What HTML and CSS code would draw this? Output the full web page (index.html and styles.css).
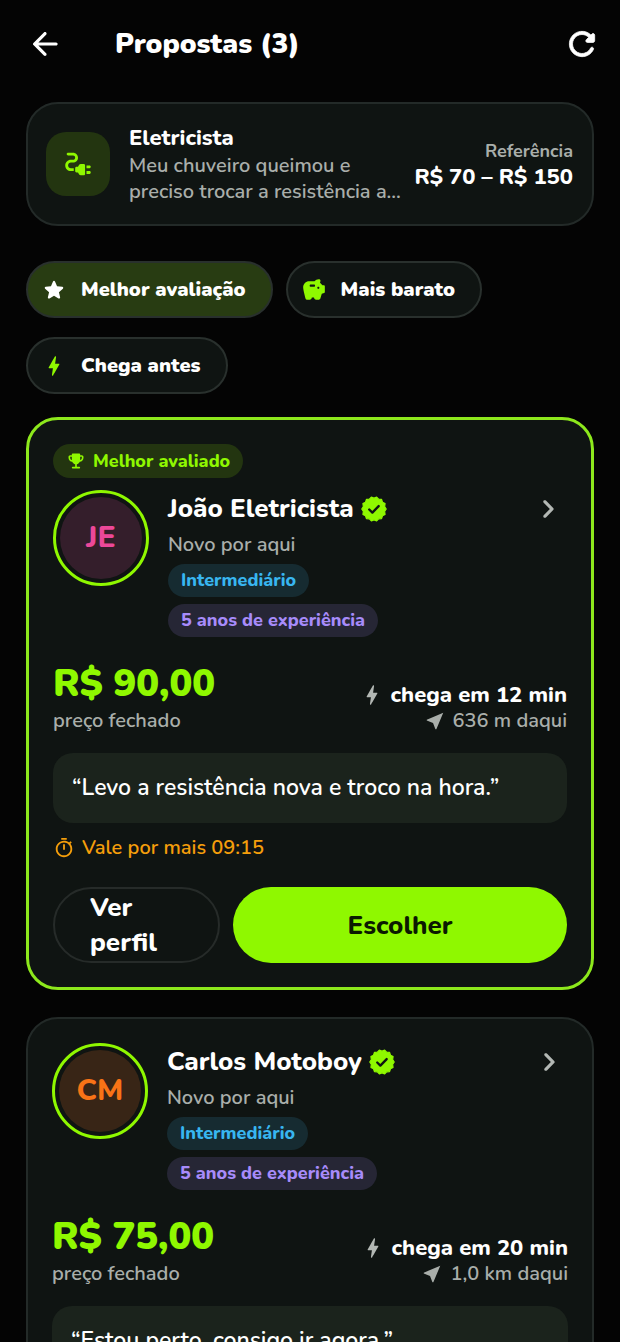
FILE: index.html
```html
<!DOCTYPE html>
<html lang="pt-BR">
<head>
  <meta charset="UTF-8">
  <meta name="viewport" content="width=device-width, initial-scale=1.0">
  <title>Propostas</title>
  <link rel="stylesheet" href="styles.css">
</head>
<body>
  <!-- shared icons -->
  <svg class="sprite" aria-hidden="true">
    <symbol id="bolt" viewBox="0 0 24 24"><path d="M10.67 21c-.35 0-.62-.31-.57-.66L11 14H7.5c-.88 0-.33-.75-.31-.78 1.26-2.23 3.15-5.53 5.65-9.93.1-.18.3-.29.5-.29.35 0 .62.31.57.66l-.9 6.34h3.51c.4 0 .62.19.4.66-3.29 5.74-5.2 9.09-5.75 10.05-.1.18-.29.29-.5.29z"/></symbol>
    <symbol id="verified" viewBox="0 0 24 24">
      <path stroke="currentColor" stroke-width="1" stroke-linejoin="round" d="M22.5 12 21.1 14.1 21.5 16.6 19.3 17.8 18.5 20.2 16 20.4 14.3 22.2 12 21.3 9.7 22.2 8 20.4 5.5 20.2 4.7 17.8 2.5 16.6 2.9 14.1 1.5 12 2.9 9.9 2.5 7.4 4.7 6.2 5.5 3.8 8 3.6 9.7 1.8 12 2.7 14.3 1.8 16 3.6 18.5 3.8 19.3 6.2 21.5 7.4 21.1 9.9z"/>
      <path fill="none" stroke="#0f1412" stroke-width="2" stroke-linecap="round" stroke-linejoin="round" d="M7.9 12.4l2.7 2.7 5.4-5.6"/>
    </symbol>
    <symbol id="chevron" viewBox="0 0 24 24"><path d="M9.29 15.88 13.17 12 9.29 8.12c-.39-.39-.39-1.02 0-1.41.39-.39 1.02-.39 1.41 0l4.59 4.59c.39.39.39 1.02 0 1.41L10.7 17.3c-.39.39-1.02.39-1.41 0-.38-.39-.39-1.03 0-1.42z"/></symbol>
    <symbol id="near" viewBox="0 0 24 24"><path d="M21 3 3 10.53v.98l6.84 2.65L12.48 21h.98L21 3z"/></symbol>
  </svg>

  <div class="screen">
    <header class="topbar">
      <button class="icon-btn" type="button" aria-label="Voltar">
        <svg class="icon icon-xl" viewBox="0 0 24 24"><path d="M19 11H7.83l4.88-4.88c.39-.39.39-1.03 0-1.42-.39-.39-1.02-.39-1.41 0l-6.59 6.59c-.39.39-.39 1.02 0 1.41l6.59 6.59c.39.39 1.02.39 1.41 0 .39-.39.39-1.02 0-1.41L7.83 13H19c.55 0 1-.45 1-1s-.45-1-1-1z"/></svg>
      </button>
      <h1 class="title">Propostas (3)</h1>
      <button class="icon-btn" type="button" aria-label="Atualizar">
        <svg class="icon icon-xl icon-heavy" viewBox="0 0 24 24"><path d="M17.65 6.35c-1.63-1.63-3.94-2.57-6.48-2.31-3.67.37-6.69 3.35-7.1 7.02C3.52 15.91 7.27 20 12 20c3.19 0 5.93-1.87 7.21-4.56.32-.67-.16-1.44-.9-1.44-.37 0-.72.2-.88.53-1.13 2.43-3.84 3.97-6.8 3.31-2.22-.49-4.01-2.3-4.48-4.52C5.31 9.44 8.26 6 12 6c1.66 0 3.14.69 4.22 1.78l-1.51 1.51c-.63.63-.19 1.71.7 1.71H19c.55 0 1-.45 1-1V6.41c0-.89-1.08-1.34-1.71-.71l-.64.65z"/></svg>
      </button>
    </header>

    <main class="content">
      <section class="request">
        <div class="request-icon">
          <svg class="icon icon-lg" viewBox="0 0 24 24"><path d="M20.2 13H18v2h2.2c.4 0 .8-.4.8-1s-.4-1-.8-1zM20.2 17H18v2h2.2c.4 0 .8-.4.8-1s-.4-1-.8-1zM16 12h-2c-.6 0-1 .3-1.3.7L12 14h-1c-.6 0-1 .4-1 1v2c0 .6.4 1 1 1h1l.7 1.3c.3.4.7.7 1.3.7h2c.6 0 1-.4 1-1v-6c0-.6-.4-1-1-1z"/><path d="M5 13c0-1.1.9-2 2-2h1.5c1.93 0 3.5-1.57 3.5-3.5S10.43 4 8.5 4H5c-.55 0-1 .45-1 1s.45 1 1 1h3.5c.83 0 1.5.67 1.5 1.5S9.33 9 8.5 9H7c-2.21 0-4 1.79-4 4s1.79 4 4 4h2v-2H7c-1.1 0-2-.9-2-2z"/></svg>
        </div>
        <div class="request-text">
          <h2 class="request-title">Eletricista</h2>
          <p class="request-desc">Meu chuveiro queimou e<br>preciso trocar a resistência a…</p>
        </div>
        <div class="request-ref">
          <span class="ref-label">Referência</span>
          <strong class="ref-value">R$ 70 – R$ 150</strong>
        </div>
      </section>

      <div class="chips">
        <button class="chip chip-active" type="button">
          <svg class="icon icon-md" viewBox="0 0 24 24"><path d="M12 17.27l4.15 2.51c.76.46 1.69-.22 1.49-1.08l-1.1-4.72 3.67-3.18c.67-.58.31-1.68-.57-1.75l-4.83-.41-1.89-4.46c-.34-.81-1.5-.81-1.84 0L9.19 8.63l-4.83.41c-.88.07-1.24 1.17-.57 1.75l3.67 3.18-1.1 4.72c-.2.86.73 1.54 1.49 1.08l4.15-2.5z"/></svg>
          Melhor avaliação
        </button>
        <button class="chip" type="button">
          <svg class="icon icon-md" viewBox="0 0 24 24"><path d="M19.83 7.5l-2.27-2.27c.07-.42.18-.81.32-1.15.11-.26.15-.56.09-.87C17.84 2.49 17.14 1.99 16.4 2c-1.59.03-3 .81-3.9 2h-5C4.46 4 2 6.46 2 9.5c0 2.25 1.37 7.48 2.08 10.04.24.86 1.03 1.46 1.93 1.46H8c1.1 0 2-.9 2-2h2c0 1.1.9 2 2 2h2.01c.88 0 1.66-.58 1.92-1.43l1.25-4.16 2.14-.72c.41-.14.68-.52.68-.95V8.5c0-.55-.45-1-1-1h-1.17zM12 9H9c-.55 0-1-.45-1-1s.45-1 1-1h3c.55 0 1 .45 1 1s-.45 1-1 1zm4 2c-.55 0-1-.45-1-1s.45-1 1-1 1 .45 1 1-.45 1-1 1z"/></svg>
          Mais barato
        </button>
        <button class="chip" type="button">
          <svg class="icon icon-md"><use href="#bolt"/></svg>
          Chega antes
        </button>
      </div>

      <article class="card card-best">
        <div class="badge">
          <svg class="icon icon-xs" viewBox="0 0 24 24"><path d="M19 5h-2V4c0-.55-.45-1-1-1H8c-.55 0-1 .45-1 1v1H5c-1.1 0-2 .9-2 2v1c0 2.55 1.92 4.63 4.39 4.94.63 1.5 1.98 2.63 3.61 2.96V19H8c-.55 0-1 .45-1 1s.45 1 1 1h8c.55 0 1-.45 1-1s-.45-1-1-1h-3v-3.1c1.63-.33 2.98-1.46 3.61-2.96C19.08 12.63 21 10.55 21 8V7c0-1.1-.9-2-2-2zM5 8V7h2v3.82C5.84 10.4 5 9.3 5 8zm14 0c0 1.3-.84 2.4-2 2.82V7h2v1z"/></svg>
          Melhor avaliado
        </div>
        <div class="worker">
          <div class="avatar"><span class="initials initials-pink">JE</span></div>
          <div class="worker-info">
            <h2 class="name">João Eletricista <svg class="icon badge-check"><use href="#verified"/></svg></h2>
            <p class="rating">Novo por aqui</p>
            <div class="tags">
              <span class="tag tag-blue">Intermediário</span>
              <span class="tag tag-purple">5 anos de experiência</span>
            </div>
          </div>
          <a class="more" href="#" aria-label="Ver João Eletricista"><svg class="icon icon-xl"><use href="#chevron"/></svg></a>
        </div>
        <div class="offer">
          <div>
            <p class="price">R$ 90,00</p>
            <p class="muted">preço fechado</p>
          </div>
          <div class="arrival">
            <p class="eta"><svg class="icon icon-md"><use href="#bolt"/></svg>chega em 12 min</p>
            <p class="distance"><svg class="icon icon-sm"><use href="#near"/></svg>636 m daqui</p>
          </div>
        </div>
        <p class="quote">“Levo a resistência nova e troco na hora.”</p>
        <p class="timer">
          <svg class="icon icon-sm" viewBox="0 0 24 24"><path d="M15 1H9v2h6V1zm-4 13h2V8h-2v6zm8.03-6.61 1.42-1.42c-.43-.51-.9-.99-1.41-1.41l-1.42 1.42C16.07 4.74 14.12 4 12 4c-4.97 0-9 4.03-9 9s4.02 9 9 9 9-4.03 9-9c0-2.12-.74-4.07-1.97-5.61zM12 20c-3.87 0-7-3.13-7-7s3.13-7 7-7 7 3.13 7 7-3.13 7-7 7z"/></svg>
          Vale por mais 09:15
        </p>
        <div class="actions">
          <button class="btn btn-outline" type="button">Ver perfil</button>
          <button class="btn btn-primary" type="button">Escolher</button>
        </div>
      </article>

      <article class="card">
        <div class="worker">
          <div class="avatar"><span class="initials initials-orange">CM</span></div>
          <div class="worker-info">
            <h2 class="name">Carlos Motoboy <svg class="icon badge-check"><use href="#verified"/></svg></h2>
            <p class="rating">Novo por aqui</p>
            <div class="tags">
              <span class="tag tag-blue">Intermediário</span>
              <span class="tag tag-purple">5 anos de experiência</span>
            </div>
          </div>
          <a class="more" href="#" aria-label="Ver Carlos Motoboy"><svg class="icon icon-xl"><use href="#chevron"/></svg></a>
        </div>
        <div class="offer">
          <div>
            <p class="price">R$ 75,00</p>
            <p class="muted">preço fechado</p>
          </div>
          <div class="arrival">
            <p class="eta"><svg class="icon icon-md"><use href="#bolt"/></svg>chega em 20 min</p>
            <p class="distance"><svg class="icon icon-sm"><use href="#near"/></svg>1,0 km daqui</p>
          </div>
        </div>
        <p class="quote">“Estou perto, consigo ir agora.”</p>
      </article>
    </main>
  </div>
</body>
</html>
```
FILE: styles.css
```css
*{margin: 0; padding: 0; box-sizing: border-box;}
body{background: #040404; color: #fff; font-family: Nunito, "Noto Sans", sans-serif; font-size: 20px; line-height: 26px; font-weight: 600;}
button{font-family: inherit; color: inherit; background: none; border: none; cursor: pointer;}
.sprite{display: none;}
.screen{height: 100vh; overflow-y: auto; scrollbar-width: none;}

.icon{width: 24px; height: 24px; fill: currentColor; flex: none; display: block;}
.icon-xs{width: 20px; height: 20px;}
.icon-sm{width: 22px; height: 22px;}
.icon-md{width: 26px; height: 26px;}
.icon-lg{width: 34px; height: 34px;}
.icon-xl{width: 38px; height: 38px;}
.icon-heavy{stroke: currentColor; stroke-width: .5;}

.topbar{display: flex; align-items: center; height: 88px; padding: 0 19px 0 26px;}
.icon-btn{display: flex;}
.title{flex: 1; margin-left: 51px; font-size: 28px; line-height: 38px; font-weight: 900;}

.content{padding: 14px 26px 26px;}

.request{display: flex; align-items: center; height: 124px; padding: 0 19px 0 18px; border: 2px solid #232a28; border-radius: 32px; background: #0f1412;}
.request-icon{display: flex; align-items: center; justify-content: center; flex: none; width: 64px; height: 64px; border-radius: 20px; background: #233510; color: #8ff800;}
.request-text{flex: 1; min-width: 0; margin-left: 19px;}
.request-title{font-size: 22px; line-height: 30px; font-weight: 800;}
.request-desc{color: #a9aeaa; white-space: nowrap;}
.request-ref{display: flex; flex-direction: column; align-items: flex-end; white-space: nowrap;}
.ref-label{font-size: 18px; font-weight: 700; color: #a9aeaa;}
.ref-value{font-size: 22px; font-weight: 800;}

.chips{display: flex; flex-wrap: wrap; gap: 19px 13px; margin-top: 35px;}
.chip{display: flex; align-items: center; gap: 14px; height: 57px; padding: 0 25px 0 13px; border: 2px solid #29302d; border-radius: 29px; background: #0f1412; font-size: 20px; font-weight: 900; white-space: nowrap;}
.chip .icon{color: #8ff800;}
.chip-active{background: #283c12;}
.chip-active .icon{color: #fff;}

.card{margin-top: 27px; padding: 24px; border: 2px solid #232a28; border-radius: 32px; background: #0f1412;}
.card-best{margin-top: 23px; border: 3px solid #8de81c;}
.badge{display: inline-flex; align-items: center; gap: 7px; height: 34px; margin-bottom: 12px; padding: 0 13px; border-radius: 17px; background: #233510; color: #8ff800; font-size: 18px; font-weight: 800; vertical-align: top;}

.worker{display: flex; align-items: flex-start;}
.avatar{flex: none; width: 96px; height: 96px; padding: 4px; border: 3px solid #8ff800; border-radius: 50%;}
.initials{display: flex; align-items: center; justify-content: center; height: 100%; border-radius: 50%; font-size: 30px; font-weight: 800;}
.initials-pink{background: #341e2b; color: #ec4899;}
.initials-orange{background: #382516; color: #f97316;}
.worker-info{flex: 1; margin-left: 19px;}
.name{display: flex; align-items: center; gap: 6px; font-size: 26px; line-height: 38px; font-weight: 800;}
.badge-check{width: 28px; height: 28px; color: #8ff800;}
.rating{margin-top: 4px; color: #a9aeaa;}
.tags{display: flex; flex-direction: column; align-items: flex-start; gap: 7px; margin-top: 6px;}
.tag{padding: 0 13px; border-radius: 17px; font-size: 18px; line-height: 33px; font-weight: 800;}
.tag-blue{background: #162b31; color: #38b6f0;}
.tag-purple{background: #262635; color: #a78bfa;}
.more{color: #b3b8b4;}

.offer{display: flex; justify-content: space-between; align-items: flex-end; margin-top: 23px;}
.price{font-size: 38px; line-height: 48px; font-weight: 900; color: #8ff800;}
.muted{color: #a9aeaa;}
.arrival{color: #a9aeaa;}
.eta, .distance{display: flex; align-items: center; justify-content: flex-end;}
.eta{gap: 6px; font-size: 22px; font-weight: 800; color: #fff;}
.eta .icon{color: #b3b8b4;}
.distance{gap: 7px;}
.quote{margin-top: 19px; padding: 19px; border-radius: 20px; background: #1b231c; font-size: 23px; line-height: 32px;}
.timer{display: flex; align-items: center; gap: 7px; margin-top: 12px; color: #f59e0b;}
.actions{display: grid; grid-template-columns: 1fr 2fr; gap: 13px; margin-top: 26px;}
.btn{height: 76px; border-radius: 38px; font-size: 26px; line-height: 35px; font-weight: 800;}
.btn-outline{padding: 0 35px; border: 2px solid #262b29; text-align: left;}
.btn-primary{background: #8ff800; color: #0b1a00;}
```
